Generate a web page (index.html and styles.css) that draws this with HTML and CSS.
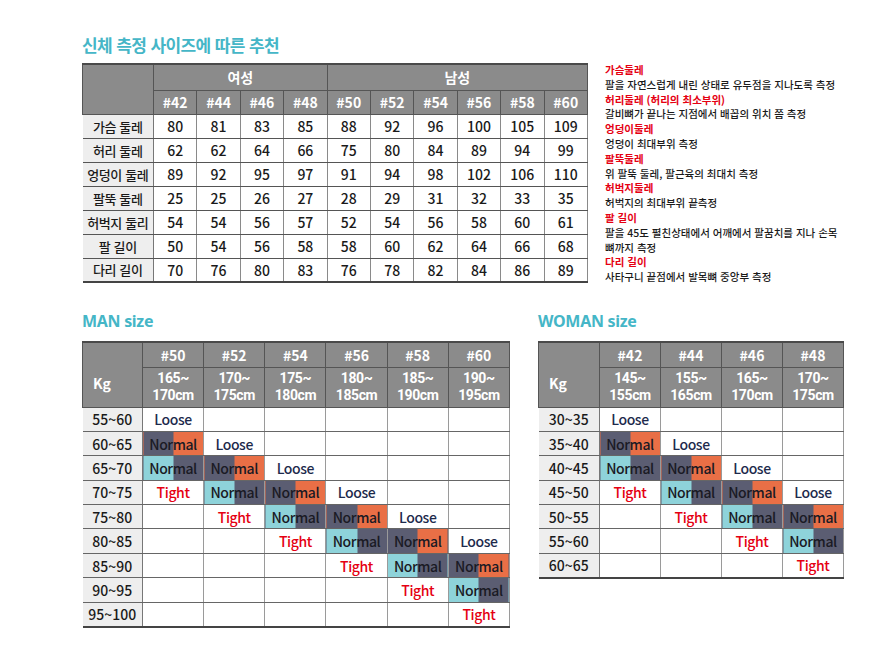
FILE: index.html
```html
<!DOCTYPE html>
<html lang="ko">
<head>
<meta charset="utf-8">
<title>사이즈 추천</title>
<link rel="stylesheet" href="styles.css">
</head>
<body>
<div class="page">
  <section class="top">
    <div class="measure">
      <h2 class="title">신체 측정 사이즈에 따른 추천</h2>
      <table class="mtable">
        <colgroup><col class="c-label"><col><col><col><col><col><col><col><col><col><col></colgroup>
        <thead>
          <tr class="h1">
            <th rowspan="2"></th>
            <th colspan="4">여성</th>
            <th colspan="6">남성</th>
          </tr>
          <tr class="h2">
            <th>#42</th><th>#44</th><th>#46</th><th>#48</th>
            <th>#50</th><th>#52</th><th>#54</th><th>#56</th><th>#58</th><th>#60</th>
          </tr>
        </thead>
        <tbody>
          <tr><th>가슴 둘레</th><td>80</td><td>81</td><td>83</td><td>85</td><td>88</td><td>92</td><td>96</td><td>100</td><td>105</td><td>109</td></tr>
          <tr><th>허리 둘레</th><td>62</td><td>62</td><td>64</td><td>66</td><td>75</td><td>80</td><td>84</td><td>89</td><td>94</td><td>99</td></tr>
          <tr><th>엉덩이 둘레</th><td>89</td><td>92</td><td>95</td><td>97</td><td>91</td><td>94</td><td>98</td><td>102</td><td>106</td><td>110</td></tr>
          <tr><th>팔뚝 둘레</th><td>25</td><td>25</td><td>26</td><td>27</td><td>28</td><td>29</td><td>31</td><td>32</td><td>33</td><td>35</td></tr>
          <tr><th>허벅지 둘리</th><td>54</td><td>54</td><td>56</td><td>57</td><td>52</td><td>54</td><td>56</td><td>58</td><td>60</td><td>61</td></tr>
          <tr><th>팔 길이</th><td>50</td><td>54</td><td>56</td><td>58</td><td>58</td><td>60</td><td>62</td><td>64</td><td>66</td><td>68</td></tr>
          <tr><th>다리 길이</th><td>70</td><td>76</td><td>80</td><td>83</td><td>76</td><td>78</td><td>82</td><td>84</td><td>86</td><td>89</td></tr>
        </tbody>
      </table>
    </div>
    <div class="notes">
      <p class="nh">가슴둘레</p>
      <p>팔을 자연스럽게 내린 상태로 유두점을 지나도록 측정</p>
      <p class="nh">허리둘레 (허리의 최소부위)</p>
      <p>갈비뼈가 끝나는 지점에서 배꼽의 위치 쯤 측정</p>
      <p class="nh">엉덩이둘레</p>
      <p>엉덩이 최대부위 측정</p>
      <p class="nh">팔뚝둘레</p>
      <p>위 팔뚝 둘레, 팔근육의 최대치 측정</p>
      <p class="nh">허벅지둘레</p>
      <p>허벅지의 최대부위 끝측정</p>
      <p class="nh">팔 길이</p>
      <p>팔을 45도 펼친상태에서 어깨에서 팔꿈치를 지나 손목<br>뼈까지 측정</p>
      <p class="nh">다리 길이</p>
      <p>사타구니 끝점에서 발목뼈 중앙부 측정</p>
    </div>
  </section>

  <section class="bottom">
    <div class="size man">
      <h2 class="stitle">MAN size</h2>
      <table class="stable">
        <colgroup><col class="c-kg"><col><col><col><col><col><col></colgroup>
        <thead>
          <tr class="s1">
            <th rowspan="2" class="kg">Kg</th>
            <th>#50</th><th>#52</th><th>#54</th><th>#56</th><th>#58</th><th>#60</th>
          </tr>
          <tr class="s2">
            <th><span class="ln">165~</span><span class="ln">170cm</span></th>
            <th><span class="ln">170~</span><span class="ln">175cm</span></th>
            <th><span class="ln">175~</span><span class="ln">180cm</span></th>
            <th><span class="ln">180~</span><span class="ln">185cm</span></th>
            <th><span class="ln">185~</span><span class="ln">190cm</span></th>
            <th><span class="ln">190~</span><span class="ln">195cm</span></th>
          </tr>
        </thead>
        <tbody>
          <tr><th>55~60</th><td class="lo">Loose</td><td></td><td></td><td></td><td></td><td></td></tr>
          <tr><th>60~65</th><td class="n1">Normal</td><td class="lo">Loose</td><td></td><td></td><td></td><td></td></tr>
          <tr><th>65~70</th><td class="n2">Normal</td><td class="n1">Normal</td><td class="lo">Loose</td><td></td><td></td><td></td></tr>
          <tr><th>70~75</th><td class="ti">Tight</td><td class="n2">Normal</td><td class="n1">Normal</td><td class="lo">Loose</td><td></td><td></td></tr>
          <tr><th>75~80</th><td></td><td class="ti">Tight</td><td class="n2">Normal</td><td class="n1">Normal</td><td class="lo">Loose</td><td></td></tr>
          <tr><th>80~85</th><td></td><td></td><td class="ti">Tight</td><td class="n2">Normal</td><td class="n1">Normal</td><td class="lo">Loose</td></tr>
          <tr><th>85~90</th><td></td><td></td><td></td><td class="ti">Tight</td><td class="n2">Normal</td><td class="n1">Normal</td></tr>
          <tr><th>90~95</th><td></td><td></td><td></td><td></td><td class="ti">Tight</td><td class="n2">Normal</td></tr>
          <tr><th>95~100</th><td></td><td></td><td></td><td></td><td></td><td class="ti">Tight</td></tr>
        </tbody>
      </table>
    </div>
    <div class="size woman">
      <h2 class="stitle">WOMAN size</h2>
      <table class="stable">
        <colgroup><col class="c-kg"><col><col><col><col></colgroup>
        <thead>
          <tr class="s1">
            <th rowspan="2" class="kg">Kg</th>
            <th>#42</th><th>#44</th><th>#46</th><th>#48</th>
          </tr>
          <tr class="s2">
            <th><span class="ln">145~</span><span class="ln">155cm</span></th>
            <th><span class="ln">155~</span><span class="ln">165cm</span></th>
            <th><span class="ln">165~</span><span class="ln">170cm</span></th>
            <th><span class="ln">170~</span><span class="ln">175cm</span></th>
          </tr>
        </thead>
        <tbody>
          <tr><th>30~35</th><td class="lo">Loose</td><td></td><td></td><td></td></tr>
          <tr><th>35~40</th><td class="n1">Normal</td><td class="lo">Loose</td><td></td><td></td></tr>
          <tr><th>40~45</th><td class="n2">Normal</td><td class="n1">Normal</td><td class="lo">Loose</td><td></td></tr>
          <tr><th>45~50</th><td class="ti">Tight</td><td class="n2">Normal</td><td class="n1">Normal</td><td class="lo">Loose</td></tr>
          <tr><th>50~55</th><td></td><td class="ti">Tight</td><td class="n2">Normal</td><td class="n1">Normal</td></tr>
          <tr><th>55~60</th><td></td><td></td><td class="ti">Tight</td><td class="n2">Normal</td></tr>
          <tr><th>60~65</th><td></td><td></td><td></td><td class="ti">Tight</td></tr>
        </tbody>
      </table>
    </div>
  </section>
</div>
</body>
</html>
```

FILE: styles.css
```css
html, body {
  margin: 0;
  padding: 0;
  background: #ffffff;
}
body {
  width: 887px;
  height: 655px;
  overflow: hidden;
  font-family: "Noto Sans CJK KR", "Noto Sans", sans-serif;
  color: #1a1a1a;
}
.page {
  padding: 33px 0 0 82px;
}
.top {
  display: flex;
  height: 276px;
}
.measure {
  width: 506px;
}
.title {
  margin: 0 0 6px;
  font-size: 17px;
  line-height: 24px;
  font-weight: 700;
  color: #45b6c7;
  letter-spacing: -0.6px;
}
.mtable {
  width: 506px;
  border-collapse: collapse;
  table-layout: fixed;
  font-size: 14px;
}
.mtable .c-label {
  width: 71px;
}
.mtable thead th {
  background: #8b8b8b;
  color: #ffffff;
  font-weight: 700;
  border: 1px solid #555555;
  padding: 0;
}
.mtable thead tr.h1 th {
  border-top: 2px solid #4a4a4a;
}
.mtable tr.h1 {
  height: 26px;
}
.mtable tr.h2 {
  height: 24px;
}
.mtable tbody tr {
  height: 24px;
}
.mtable tbody th {
  background: #eeeeee;
  font-weight: 500;
  font-size: 13px;
  border-bottom: 1px solid #555555;
  border-right: 1px solid #777777;
  padding: 0;
  letter-spacing: -0.4px;
}
.mtable tbody td {
  text-align: center;
  padding: 0;
  font-weight: 500;
  border-bottom: 1px solid #555555;
  border-left: 1px solid #8a8a8a;
  border-right: 1px solid #8a8a8a;
}
.mtable tbody tr:last-child th,
.mtable tbody tr:last-child td {
  border-bottom: 2px solid #444444;
}

.notes {
  margin: 30px 0 0 17px;
  font-size: 10.5px;
  line-height: 14.8px;
  font-weight: 500;
  letter-spacing: 0;
  color: #1a1a1a;
}
.notes p {
  margin: 0;
  white-space: nowrap;
}
.notes .nh {
  color: #e50012;
  font-weight: 700;
}

.bottom {
  display: flex;
  gap: 28px;
}
.man {
  width: 428px;
}
.woman {
  width: 306px;
}
.stitle {
  margin: 0 0 8px;
  font-family: "Noto Sans", sans-serif;
  font-size: 16px;
  line-height: 24px;
  font-weight: 700;
  color: #45b6c7;
  letter-spacing: -0.3px;
}
.stable {
  width: 100%;
  border-collapse: collapse;
  table-layout: fixed;
  font-size: 14px;
}
.man .c-kg {
  width: 60px;
}
.woman .c-kg {
  width: 61px;
}
.stable thead th {
  background: #8b8b8b;
  color: #ffffff;
  font-weight: 700;
  border: 1px solid #555555;
  padding: 0;
}
.stable thead th .ln {
  display: block;
  height: 17px;
  line-height: 17px;
  font-family: Roboto, "Noto Sans CJK KR", sans-serif;
  font-size: 14px;
  letter-spacing: -0.4px;
}
.stable thead tr.s1 th {
  border-top: 2px solid #4a4a4a;
}
.stable thead th.kg {
  text-align: left;
  padding: 16px 0 0 10px;
}
.stable tr.s1 {
  height: 25px;
}
.stable tr.s2 {
  height: 40px;
}
.stable tbody tr {
  height: 24.4px;
}
.stable tbody th {
  background: #eeeeee;
  font-weight: 500;
  border-bottom: 1px solid #666666;
  border-right: 1px solid #777777;
  padding: 0;
}
.stable tbody td {
  text-align: center;
  padding: 0;
  font-weight: 500;
  border-bottom: 1px solid #666666;
  border-left: 1px solid #9a9a9a;
  border-right: 1px solid #9a9a9a;
  letter-spacing: -0.4px;
}
.stable tbody tr:last-child th,
.stable tbody tr:last-child td {
  border-bottom: 2px solid #444444;
}
.stable td.lo {
  color: #1d2a4c;
}
.stable td.ti {
  color: #e50012;
}
.stable td.n1 {
  background: linear-gradient(to right, #5b5d72 50%, #e96f46 50%);
  color: #1a1a24;
}
.stable td.n2 {
  background: linear-gradient(to right, #8ed3da 50%, #5b5d72 50%);
  color: #1a1a24;
}
```
